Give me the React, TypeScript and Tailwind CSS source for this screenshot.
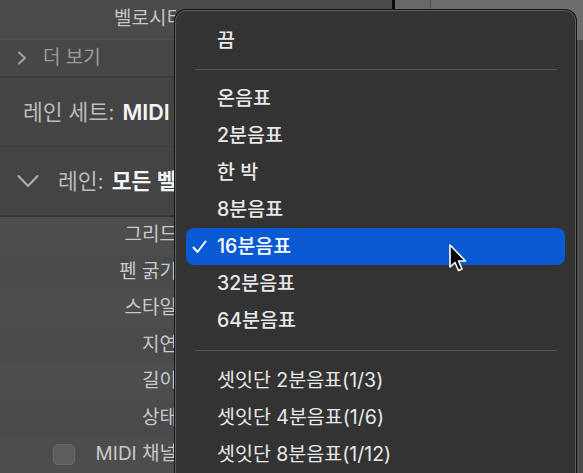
import React from "react";

const font = { fontFamily: '"Inter", "Noto Sans CJK KR", sans-serif' };

function Row({ label, shade }: { label: React.ReactNode; shade: string }) {
  return (
    <div className={`flex h-[37px] items-center ${shade}`}>
      <div className="w-[176px] overflow-hidden">
        <div className="flex w-[177px] items-center justify-end text-[19px] text-[#c9c9c9] whitespace-nowrap">{label}</div>
      </div>
    </div>
  );
}

function Item({ text, weight = "font-medium", selected = false }: { text: string; weight?: string; selected?: boolean }) {
  return (
    <div
      className={`relative mx-[10px] flex h-[37px] items-center rounded-[8px] pl-[31px] text-[19.5px] whitespace-nowrap ${weight} ${
        selected ? "bg-[#0a5ad4] text-white" : "text-[#e8e8e8]"
      }`}
    >
      {selected && (
        <svg className="absolute left-[6px] top-[12px]" width="15" height="14" viewBox="0 0 15 14">
          <polyline points="1.5,7.5 5.5,12 13.5,1.5" fill="none" stroke="white" strokeWidth="2" strokeLinecap="round" strokeLinejoin="round" />
        </svg>
      )}
      {text}
    </div>
  );
}

function Sep({ h }: { h: string }) {
  return (
    <div className={`flex ${h} items-center px-[19px] pr-[18px]`}>
      <div className="h-px w-full bg-[#575757]" />
    </div>
  );
}

export default function App() {
  return (
    <div className="relative h-[473px] w-[583px] overflow-hidden bg-[#474747]" style={font}>
      <div className="flex h-full">
        {/* left panel */}
        <div className="flex w-[392px] flex-col">
          <div className="flex h-[40px] items-center bg-[#4a4a4a] border-b border-[#525252]">
            <div className="w-[176px] overflow-hidden">
              <div className="w-[184px] text-right text-[19px] text-[#c6c6c6] whitespace-nowrap">벨로시티</div>
            </div>
          </div>
          <div className="flex h-[39px] items-center bg-[#474747] pl-[17px] border-b-2 border-[#3c3c3c]">
            <svg width="11" height="14" viewBox="0 0 11 14">
              <polyline points="2,1.5 8,7 2,12.5" fill="none" stroke="#a3a3a3" strokeWidth="2" strokeLinecap="round" strokeLinejoin="round" />
            </svg>
            <span className="ml-[15px] text-[19px] text-[#9c9c9c]">더 보기</span>
          </div>
          <div className="flex h-[70px] items-center bg-[#444444] border-b border-[#3e3e3e]">
            <div className="flex w-[176px] overflow-hidden pl-[23px] text-[21.5px] whitespace-nowrap">
              <span className="text-[#bcbcbc]">레인 세트:</span>
              <span className="ml-[8px] font-semibold text-[#f5f5f5]">MIDI</span>
            </div>
          </div>
          <div className="flex h-[71px] items-center bg-[#444444] border-b-2 border-[#353535]">
            <div className="flex w-[176px] items-center overflow-hidden pl-[17px] text-[21.5px] whitespace-nowrap">
              <svg className="shrink-0" width="22" height="14" viewBox="0 0 22 14">
                <polyline points="1.5,2 11,12 20.5,2" fill="none" stroke="#b0b0b0" strokeWidth="2" strokeLinecap="round" strokeLinejoin="round" />
              </svg>
              <span className="ml-[19px] text-[#bcbcbc]">레인:</span>
              <span className="ml-[8px] font-semibold text-[#f5f5f5]">모든 벨</span>
            </div>
          </div>
          <Row label="그리드" shade="bg-[#4d4d4d]" />
          <Row label="펜 굵기" shade="bg-[#4a4a4a]" />
          <Row label="스타일" shade="bg-[#4d4d4d]" />
          <Row label="지연" shade="bg-[#4a4a4a]" />
          <Row label="길이" shade="bg-[#4d4d4d]" />
          <Row label="상태" shade="bg-[#4a4a4a]" />
          <Row
            shade="bg-[#4d4d4d]"
            label={
              <>
                <span className="mr-[21px] h-[21px] w-[22px] rounded-[5px] border border-[#6a6a6a] bg-[#5d5d5d]" />
                MIDI 채널
              </>
            }
          />
        </div>
        <div className="w-[3px] bg-[#0c0c0c]" />
        {/* right panel */}
        <div className="flex flex-1 flex-col">
          <div className="flex h-[40px]">
            <div className="w-[36px] bg-[#686868] border-r border-[#505050]" />
            <div className="flex-1 bg-[#6c6c6c]" />
          </div>
          <div className="flex flex-1">
            <div className="flex-1 bg-[#444444]" />
            <div className="w-[5px] border-l border-[#5c5c5c] bg-[#4a4a4a]" />
          </div>
        </div>
      </div>

      {/* popup menu */}
      <div className="absolute left-[175px] top-[10px] h-[480px] w-[401px] rounded-[11px] border border-[#5e5e5e] bg-[#333333] pt-[11px] shadow-[0_0_0_1px_#151515]">
        <Item text="끔" />
        <Sep h="h-[21px]" />
        <Item text="온음표" />
        <Item text="2분음표" />
        <Item text="한 박" />
        <Item text="8분음표" />
        <Item text="16분음표" selected />
        <Item text="32분음표" />
        <Item text="64분음표" />
        <Sep h="h-[23px]" />
        <Item text="셋잇단 2분음표(1/3)" weight="font-normal" />
        <Item text="셋잇단 4분음표(1/6)" weight="font-normal" />
        <Item text="셋잇단 8분음표(1/12)" weight="font-normal" />
      </div>

      {/* cursor */}
      <svg className="absolute left-[448px] top-[243px]" width="22" height="32" viewBox="0 0 22 32">
        <path d="M2 2 L2 24 L7 19.5 L10.5 27.5 L14 26 L10.5 18 L17.5 18 Z" fill="#000" stroke="#fff" strokeWidth="1.6" strokeLinejoin="round" />
      </svg>
    </div>
  );
}
